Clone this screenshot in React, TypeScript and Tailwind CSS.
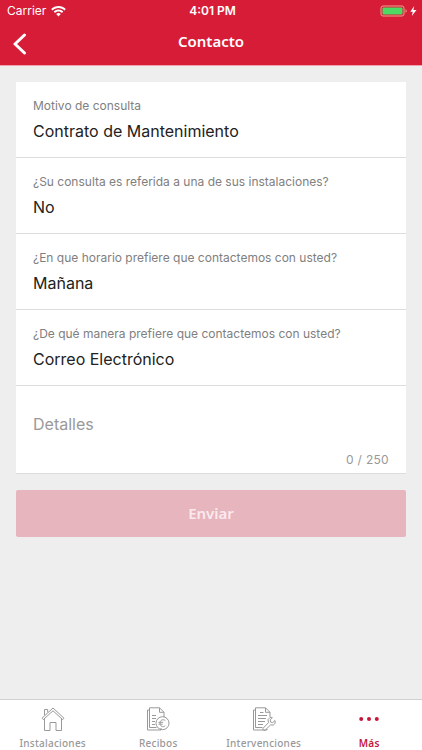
import { useState, type ReactNode } from "react";

const MAX_LENGTH = 250;

const questions = [
  {
    id: "motivo",
    label: "Motivo de consulta",
    value: "Contrato de Mantenimiento",
  },
  {
    id: "instalacion",
    label: "¿Su consulta es referida a una de sus instalaciones?",
    value: "No",
  },
  {
    id: "horario",
    label: "¿En que horario prefiere que contactemos con usted?",
    value: "Mañana",
  },
  {
    id: "manera",
    label: "¿De qué manera prefiere que contactemos con usted?",
    value: "Correo Electrónico",
  },
];

function StatusBar() {
  return (
    <div className="grid grid-cols-3 items-center h-[22px] pl-[7px] pr-1 text-white font-['Inter',sans-serif]">
      <div className="flex items-center gap-[5px] text-xs">
        <span>Carrier</span>
        <svg width="15" height="11" viewBox="0 0 15 11" fill="currentColor" aria-hidden="true">
          <path d="M7.500 0C4.700 0 2.100 1.100.200 3l1.300 1.400C3.100 2.800 5.200 1.900 7.500 1.900s4.400.9 6 2.500L14.800 3C12.900 1.100 10.300 0 7.500 0Z" />
          <path d="M7.500 3.500c-1.900 0-3.600.8-4.800 2l1.300 1.400c.9-.9 2.100-1.500 3.500-1.500s2.600.6 3.500 1.500l1.300-1.400c-1.200-1.200-2.900-2-4.800-2Z" />
          <path d="M7.500 6.900c-.9 0-1.700.4-2.300 1l2.300 2.500 2.300-2.500c-.6-.6-1.400-1-2.300-1Z" />
        </svg>
      </div>
      <div className="text-center text-xs font-semibold">4:01 PM</div>
      <div className="flex items-center justify-end">
        <svg width="38" height="12" viewBox="0 0 38 12" aria-hidden="true">
          <rect x="1" y="1" width="23" height="10" rx="2" fill="none" stroke="#eba08c" strokeWidth="1" />
          <rect x="2.500" y="2.500" width="20" height="7" rx="1" fill="#4cd964" />
          <path d="M25.500 4.200c.8.300 1.200 1 1.200 1.800s-.4 1.500-1.200 1.800Z" fill="#eba08c" />
          <path d="M34.200 1 30.300 6.700h2.500L31.800 11l4.700-5.900h-3.100Z" fill="#fff" />
        </svg>
      </div>
    </div>
  );
}

function HomeIcon() {
  return (
    <svg width="24" height="24" viewBox="0 0 24 24" fill="none" stroke="currentColor" strokeWidth="1" aria-hidden="true">
      <path d="M12 1 1 11.200l1.300 1.400L12 3.800l9.700 8.800 1.300-1.400Z" />
      <path d="M3.500 8.200V2.500h3.200v2.800" />
      <path d="M3.500 12v11.500H9v-8h6v8h5.500V12" />
    </svg>
  );
}

function ReceiptIcon() {
  return (
    <svg width="24" height="24" viewBox="0 0 24 24" fill="none" stroke="currentColor" strokeWidth="1" aria-hidden="true">
      <path d="M3.500 3H1.500v20h13.500v-2" />
      <path d="M10.500 20.500h-7V.8h10L18 5.300V10" />
      <path d="M13.500.8v4.500H18" />
      <path d="M6 8.500h4M6 11.500h4M6 14.500h3M6 17.500h3" />
      <circle cx="16.500" cy="16.200" r="6.500" />
      <path d="M19.300 13.600c-2.500-1.900-5.300-.4-5.300 2.600s2.800 4.500 5.300 2.600M12.500 15.300h4.700M12.500 17.200h4.200" />
    </svg>
  );
}

function RepairIcon() {
  return (
    <svg width="24" height="24" viewBox="0 0 24 24" fill="none" stroke="currentColor" strokeWidth="1" aria-hidden="true">
      <path d="M3.500 3H1.500v20h13.500v-1" />
      <path d="M10.500 20.500h-7V.8h10L18 5.300V10" />
      <path d="M13.500.8v4.500H18" />
      <path d="M8 5.500h3.500M6 8.500h9M6 11.500h8M6 14.500h7M6 17.500h5" />
      <path d="m18 10.500-2 2.200.5 3-5.500 5.600c-.7 1.200.9 2.700 2 2l5.700-5.500 2.700.3c1.700-1.100 2.200-2.700 1.600-4.600l-2.300 2.100-2.100-.5-.4-2.200 2.200-2.200c-.8-.4-1.600-.5-2.400-.2Z" />
    </svg>
  );
}

function MoreIcon() {
  return (
    <svg width="24" height="24" viewBox="0 0 24 24" fill="currentColor" aria-hidden="true">
      <circle cx="4.200" cy="12" r="2" />
      <circle cx="12" cy="12" r="2" />
      <circle cx="19.800" cy="12" r="2" />
    </svg>
  );
}

function Tab({ label, active, children }: { label: string; active?: boolean; children: ReactNode }) {
  return (
    <a
      href="#"
      aria-current={active ? "page" : undefined}
      className={
        active
          ? "flex flex-col items-center pt-[7px] text-[#c4183a] font-semibold"
          : "flex flex-col items-center pt-[7px] text-[#999999] font-medium"
      }
    >
      {children}
      <span className="mt-[5px] text-[10px] leading-[14px] tracking-wide">{label}</span>
    </a>
  );
}

export default function App() {
  const [details, setDetails] = useState("");

  return (
    <div className="flex flex-col min-h-screen bg-[#eeeeee] font-['Inter',sans-serif]">
      <header className="bg-[#d71c37] border-b border-[#f0a0ae]">
        <StatusBar />
        <div className="grid grid-cols-3 items-center h-[43px] px-3 pb-1 text-white">
          <button type="button" aria-label="Volver" className="justify-self-start pt-1">
            <svg width="15" height="22" viewBox="0 0 15 22" fill="none" stroke="currentColor" strokeWidth="3" strokeLinecap="round" strokeLinejoin="round" aria-hidden="true">
              <path d="M12.500 2 3 11l9.500 9" />
            </svg>
          </button>
          <h1 className="text-center text-[15px] font-semibold font-['Noto_Sans',sans-serif]">Contacto</h1>
        </div>
      </header>

      <main className="flex-1 p-4">
        <form onSubmit={(e) => e.preventDefault()}>
          <div className="bg-white border-b border-[#dddddd]">
            {questions.map((q) => (
              <div key={q.id} className="pt-[15px] px-[17px] pb-[14px] border-b border-[#dddddd]">
                <label htmlFor={q.id} className="block text-xs leading-[18px] text-[#808080]">
                  {q.label}
                </label>
                <select id={q.id} className="block w-full mt-1 appearance-none bg-transparent text-base leading-6 text-[#222222]">
                  <option>{q.value}</option>
                </select>
              </div>
            ))}
            <div className="px-[17px] pt-[26px] pb-1">
              <textarea
                aria-label="Detalles"
                placeholder="Detalles"
                rows={1}
                maxLength={MAX_LENGTH}
                value={details}
                onChange={(e) => setDetails(e.target.value)}
                className="block w-full resize-none overflow-hidden text-base leading-6 text-[#222222] placeholder:text-[#999999] outline-none"
              />
              <p className="mt-[15px] text-right text-xs leading-[18px] tracking-wide text-[#999999]">
                {details.length} / {MAX_LENGTH}
              </p>
            </div>
          </div>
          <button
            type="submit"
            disabled={details.length === 0}
            className="w-full h-[47px] mt-4 rounded-xs bg-[#c4183a] disabled:bg-[#e6b5bd] text-[15px] font-semibold text-white disabled:text-[#fbeaed] font-['Noto_Sans',sans-serif]"
          >
            Enviar
          </button>
        </form>
      </main>

      <nav className="grid grid-cols-4 bg-white border-t border-[#d0d0d0] font-['Noto_Sans',sans-serif]">
        <Tab label="Instalaciones">
          <HomeIcon />
        </Tab>
        <Tab label="Recibos">
          <ReceiptIcon />
        </Tab>
        <Tab label="Intervenciones">
          <RepairIcon />
        </Tab>
        <Tab label="Más" active>
          <MoreIcon />
        </Tab>
      </nav>
    </div>
  );
}
